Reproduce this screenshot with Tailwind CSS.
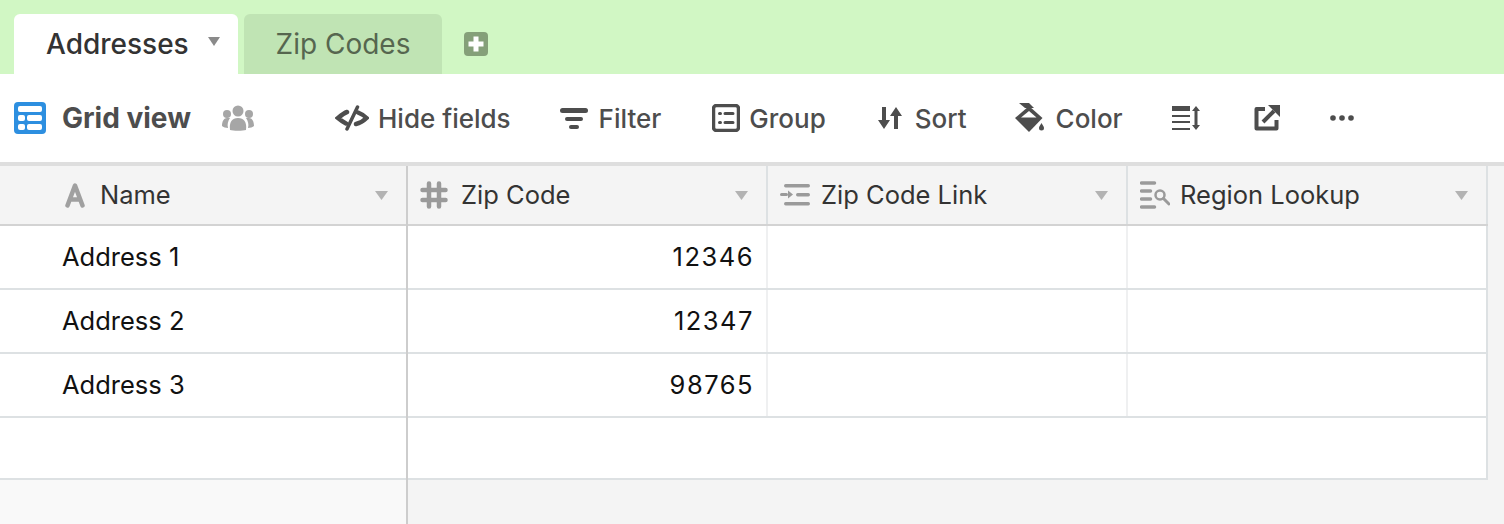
<!DOCTYPE html>
<html lang="en">
<head>
    <meta charset="UTF-8">
    <title>Addresses - Grid view</title>
    <script src="https://cdn.jsdelivr.net/npm/@tailwindcss/browser@4"></script>
</head>
<body class="bg-[#f4f4f4] font-['Inter',sans-serif] overflow-hidden">
<div class="w-[1504px] h-[524px] overflow-hidden flex flex-col">

    <!-- table tabs -->
    <div class="h-[74px] shrink-0 bg-[#d1f7c4] flex items-end pl-[14px]">
        <div class="w-[224px] h-[60px] bg-white rounded-t-[6px] flex items-center pl-[32px] pb-[1px]">
            <span class="text-[28px] leading-none font-medium text-[#333]">Addresses</span>
            <svg class="ml-[18px] mb-[4px]" width="14" height="10" viewBox="0 0 14 10"><path d="M1 0h12l-6 9z" fill="#8a8a8a"/></svg>
        </div>
        <div class="ml-[6px] w-[198px] h-[60px] bg-[#c0e4b4] rounded-t-[6px] flex items-center justify-center pb-[1px]">
            <span class="text-[28px] leading-none text-[#56664f]">Zip Codes</span>
        </div>
        <svg class="ml-[22px] mb-[18px]" width="24" height="24" viewBox="0 0 24 24"><rect width="24" height="24" rx="4" fill="#85a079"/><path d="M12 4.500v15M4.500 12h15" stroke="#fff" stroke-width="5"/></svg>
    </div>

    <!-- view bar -->
    <div class="h-[88px] shrink-0 bg-white flex items-center text-[#4d4d4d] text-[26px] font-medium">
        <svg class="ml-[14px]" width="32" height="32" viewBox="0 0 32 32"><rect width="32" height="32" rx="4" fill="#2d8fe0"/><g fill="#fff"><rect x="4" y="4" width="24" height="6" rx="2"/><rect x="4" y="13" width="7" height="6" rx="2"/><rect x="13" y="13" width="15" height="6" rx="2"/><rect x="4" y="22" width="7" height="6" rx="2"/><rect x="13" y="22" width="15" height="6" rx="2"/></g></svg>
        <span class="ml-[16px] font-bold text-[28px] w-[128px] whitespace-nowrap">Grid view</span>
        <svg class="ml-[32px]" width="32" height="26" viewBox="0 0 32 26" fill="#a6a6a6"><circle cx="16" cy="6" r="5.500"/><circle cx="5" cy="9" r="4"/><circle cx="27" cy="9" r="4"/><path d="M8 25c-1-8 2-12 8-12s9 4 8 12c-3 1-13 1-16 0z"/><path d="M6 23c-2 0-5-1-6-2 0-5 2-8 5-8h3c-2 3-3 6-2 10zM26 23c2 0 5-1 6-2 0-5-2-8-5-8h-3c2 3 3 6 2 10z"/></svg>

        <svg class="ml-[81px]" width="34" height="26" viewBox="0 0 34 26" fill="none" stroke="#4d4d4d" stroke-width="4.500" stroke-linecap="round"><path d="M12 7C9 8 6 10.500 3 13c3 2.500 5 4 8 5.500M23 7.500c4 1.500 6 3 8.500 5.500-2.500 2.500-5.500 5-10.500 6"/><path d="M22.500 2 12 24" stroke-width="3.500"/></svg>
        <span class="ml-[9px] whitespace-nowrap">Hide fields</span>

        <svg class="ml-[49px]" width="28" height="24" viewBox="0 0 28 24" fill="#4d4d4d"><rect width="28" height="5" y="2" rx="2.500"/><rect x="5" y="11" width="18" height="4" rx="2"/><rect x="9" y="19" width="10" height="4" rx="2"/></svg>
        <span class="ml-[11px]">Filter</span>

        <svg class="ml-[51px]" width="28" height="28" viewBox="0 0 28 28" fill="none"><rect x="1.500" y="1.500" width="25" height="25" rx="3" stroke="#4d4d4d" stroke-width="3.500"/><path d="M7.500 9.500h1M7.500 18.500h1M13 9.500h8M13 18.500h8" stroke="#4d4d4d" stroke-width="3" stroke-linecap="round"/></svg>
        <span class="ml-[9px]">Group</span>

        <svg class="ml-[52px]" width="24" height="24" viewBox="0 0 24 24" fill="#4d4d4d"><path d="M4 1h4v13h4L6 23 0 14h4zM16 23h4V10h4L18 1l-6 9h4z"/></svg>
        <span class="ml-[13px]">Sort</span>

        <svg class="ml-[48px]" width="30" height="30" viewBox="0 0 30 30" fill="#4d4d4d"><path d="M14 3 27.500 15 14 29 0 15z"/><path d="M4 0h10l5 5H10z"/><path d="M6 14.500 14 8l7.500 6.500z" fill="#fff"/><path d="M26.500 20c1.500 2.500 2.500 3.500 2.500 5a2.500 2.500 0 0 1-5 0c0-1.500 1-2.500 2.500-5z"/></svg>
        <span class="ml-[11px]">Color</span>

        <svg class="ml-[49px]" width="28" height="24" viewBox="0 0 28 24" fill="#4d4d4d"><rect width="18" height="5"/><rect y="9" width="18" height="2"/><rect y="15" width="18" height="2"/><rect y="22" width="18" height="2"/><path d="M24 0l4 5h-2.500v14H28l-4 5-4-5h2.500V5H20z"/></svg>

        <svg class="ml-[54px]" width="26" height="26" viewBox="0 0 26 26" fill="none" stroke="#4d4d4d" stroke-width="4" stroke-linejoin="round"><path d="M11 4H2.500v19.500h20V15"/><path d="M9 17 20 6"/><path d="M14 0h12v12z" fill="#4d4d4d" stroke="none"/></svg>

        <svg class="ml-[50px]" width="24" height="6" viewBox="0 0 24 6" fill="#4d4d4d"><circle cx="3" cy="3" r="2.800"/><circle cx="12" cy="3" r="2.800"/><circle cx="21" cy="3" r="2.800"/></svg>
    </div>

    <!-- grid -->
    <div class="flex-1 border-t-[4px] border-[#dedede] flex min-h-0">
        <!-- frozen column -->
        <div class="w-[408px] shrink-0 border-r-[2px] border-[#cdcdcd] flex flex-col">
            <div class="h-[60px] shrink-0 bg-[#f4f4f4] border-b-[2px] border-[#d3d3d3] flex items-center pl-[62px] pr-[18px]">
                <svg width="26" height="26" viewBox="0 0 26 26" fill="none" stroke="#a0a0a0" stroke-width="4.500" stroke-linecap="round" stroke-linejoin="round"><path d="M5.500 23.500 13 3.500l7.500 20M8.500 17.500h9"/></svg>
                <span class="ml-[12px] text-[25.5px] text-[#333] flex-1">Name</span>
                <svg width="13" height="9" viewBox="0 0 13 9"><path d="M0 0h13L6.500 9z" fill="#b3b3b3"/></svg>
            </div>
            <div class="h-[64px] shrink-0 bg-white border-b-[2px] border-[#dde1e3] flex items-center pl-[62px] text-[25.5px] text-[#111]">Address 1</div>
            <div class="h-[64px] shrink-0 bg-white border-b-[2px] border-[#dde1e3] flex items-center pl-[62px] text-[25.5px] text-[#111]">Address 2</div>
            <div class="h-[64px] shrink-0 bg-white border-b-[2px] border-[#dde1e3] flex items-center pl-[62px] text-[25.5px] text-[#111]">Address 3</div>
            <div class="h-[62px] shrink-0 bg-white border-b-[2px] border-[#dde1e3]"></div>
            <div class="flex-1 bg-[#f9f9f9]"></div>
        </div>

        <!-- scrolling columns -->
        <div class="w-[1080px] shrink-0 flex flex-col">
            <div class="h-[60px] shrink-0 grid grid-cols-3 bg-[#f4f4f4] border-b-[2px] border-[#d3d3d3] text-[25.5px] text-[#333]">
                <div class="flex items-center pl-[12px] pr-[18px] border-r-[2px] border-[#dde1e3]">
                    <svg width="28" height="28" viewBox="0 0 28 28" fill="none" stroke="#9a9a9a" stroke-width="4.500" stroke-linecap="round"><path d="M9 2.500v23M19 2.500v23M2.500 9h23M2.500 19h23"/></svg>
                    <span class="ml-[13px] flex-1">Zip Code</span>
                    <svg width="13" height="9" viewBox="0 0 13 9"><path d="M0 0h13L6.500 9z" fill="#b3b3b3"/></svg>
                </div>
                <div class="flex items-center pl-[12px] pr-[18px] border-r-[2px] border-[#dde1e3]">
                    <svg width="30" height="24" viewBox="0 0 30 24" fill="#9a9a9a"><rect x="4" y="1" width="26" height="3.500" rx="1.700"/><rect x="0" y="10" width="8" height="3" rx="1.500"/><path d="M8 7.500 13 11.500 8 15.500z"/><rect x="16" y="10" width="14" height="3.500" rx="1.700"/><rect x="4" y="19" width="26" height="3.500" rx="1.700"/></svg>
                    <span class="ml-[11px] flex-1">Zip Code Link</span>
                    <svg width="13" height="9" viewBox="0 0 13 9"><path d="M0 0h13L6.500 9z" fill="#b3b3b3"/></svg>
                </div>
                <div class="flex items-center pl-[12px] pr-[18px] border-r-[2px] border-[#dde1e3]">
                    <svg width="30" height="28" viewBox="0 0 30 28" fill="none" stroke="#9a9a9a"><path d="M1.500 2h13M1.500 10h9M1.500 18h9M1.500 26h13" stroke-width="3.500" stroke-linecap="round"/><circle cx="20" cy="14" r="4.500" stroke-width="2.500"/><path d="M23.500 17.500 29 23" stroke-width="3" stroke-linecap="round"/></svg>
                    <span class="ml-[10px] flex-1">Region Lookup</span>
                    <svg width="13" height="9" viewBox="0 0 13 9"><path d="M0 0h13L6.500 9z" fill="#b3b3b3"/></svg>
                </div>
            </div>
            <div class="h-[64px] shrink-0 grid grid-cols-3 bg-white border-b-[2px] border-[#dde1e3] text-[25.5px] text-[#111]">
                <div class="flex items-center justify-end pr-[12px] border-r-[2px] border-[#eff0f1] tracking-[1.5px]">12346</div>
                <div class="border-r-[2px] border-[#eff0f1]"></div>
                <div class="border-r-[2px] border-[#dde1e3]"></div>
            </div>
            <div class="h-[64px] shrink-0 grid grid-cols-3 bg-white border-b-[2px] border-[#dde1e3] text-[25.5px] text-[#111]">
                <div class="flex items-center justify-end pr-[12px] border-r-[2px] border-[#eff0f1] tracking-[1.5px]">12347</div>
                <div class="border-r-[2px] border-[#eff0f1]"></div>
                <div class="border-r-[2px] border-[#dde1e3]"></div>
            </div>
            <div class="h-[64px] shrink-0 grid grid-cols-3 bg-white border-b-[2px] border-[#dde1e3] text-[25.5px] text-[#111]">
                <div class="flex items-center justify-end pr-[12px] border-r-[2px] border-[#eff0f1] tracking-[1.5px]">98765</div>
                <div class="border-r-[2px] border-[#eff0f1]"></div>
                <div class="border-r-[2px] border-[#dde1e3]"></div>
            </div>
            <div class="h-[62px] shrink-0 bg-white border-b-[2px] border-r-[2px] border-[#dde1e3]"></div>
        </div>
    </div>
</div>
</body>
</html>
